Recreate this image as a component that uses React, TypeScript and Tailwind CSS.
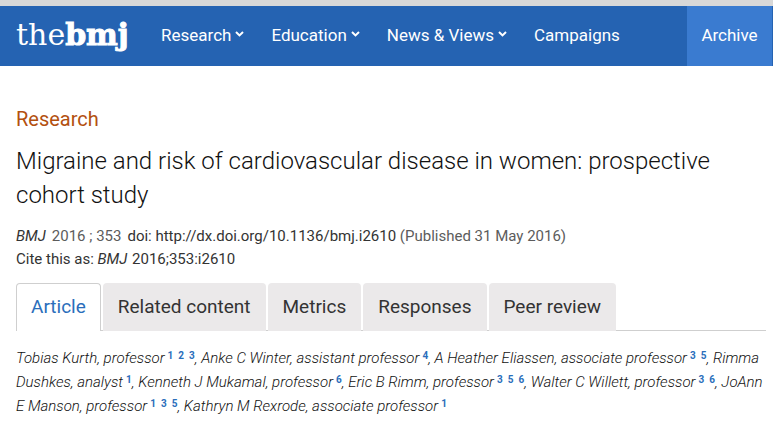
import React from "react";

interface NavItem {
  label: string;
  menu: boolean;
}

interface Author {
  name: string;
  role: string;
  refs: number[];
}

const navItems: NavItem[] = [
  { label: "Research", menu: true },
  { label: "Education", menu: true },
  { label: "News & Views", menu: true },
  { label: "Campaigns", menu: false },
];

const tabs = [
  "Article",
  "Related content",
  "Metrics",
  "Responses",
  "Peer review",
];

const authors: Author[] = [
  { name: "Tobias Kurth", role: "professor", refs: [1, 2, 3] },
  { name: "Anke C Winter", role: "assistant professor", refs: [4] },
  { name: "A Heather Eliassen", role: "associate professor", refs: [3, 5] },
  { name: "Rimma Dushkes", role: "analyst", refs: [1] },
  { name: "Kenneth J Mukamal", role: "professor", refs: [6] },
  { name: "Eric B Rimm", role: "professor", refs: [3, 5, 6] },
  { name: "Walter C Willett", role: "professor", refs: [3, 6] },
  { name: "JoAnn E Manson", role: "professor", refs: [1, 3, 5] },
  { name: "Kathryn M Rexrode", role: "associate professor", refs: [1] },
];

function Chevron() {
  return (
    <svg
      viewBox="0 0 9 6"
      className="mb-1 h-[6px] w-[9px]"
      fill="none"
      stroke="currentColor"
      strokeWidth="2"
      aria-hidden="true"
    >
      <path d="M1 1 L4.5 4.4 L8 1" />
    </svg>
  );
}

function Logo() {
  return (
    <a
      href="#"
      className="flex w-[145px] shrink-0 font-['DejaVu_Serif',serif] text-[30px] leading-[58px]"
    >
      <span>the</span>
      <span className="font-bold [-webkit-text-stroke:1px_white]">bmj</span>
    </a>
  );
}

function Header() {
  return (
    <header className="flex h-[66px] items-stretch border-t-[6px] border-[#d8d8d8] bg-[#2563b2] pr-px pl-4 text-[17px] text-white">
      <Logo />
      <nav className="flex flex-1 items-center gap-[27px] whitespace-nowrap">
        {navItems.map((item) =>
          item.menu ? (
            <button key={item.label} className="flex items-center gap-1">
              {item.label}
              <Chevron />
            </button>
          ) : (
            <a key={item.label} href="#">
              {item.label}
            </a>
          )
        )}
      </nav>
      <a
        href="#"
        className="flex w-[85px] shrink-0 items-center justify-center bg-[#3a7bd0]"
      >
        Archive
      </a>
    </header>
  );
}

function Tabs() {
  return (
    <div
      role="tablist"
      className="mt-3 flex gap-[2px] border-b border-[#cfcfcf] text-[19px] whitespace-nowrap"
    >
      {tabs.map((tab, index) => (
        <button
          key={tab}
          role="tab"
          aria-selected={index === 0}
          className={
            index === 0
              ? "-mb-px h-12 rounded-t border border-b-0 border-[#cfcfcf] bg-white px-[14px] text-[#2a6ebb]"
              : "-mb-px h-12 rounded-t bg-[#ebe9ea] px-[15px]"
          }
        >
          {tab}
        </button>
      ))}
    </div>
  );
}

function Authors() {
  return (
    <p className="mt-[15px] text-[15px] leading-6 font-light text-[#111111] italic">
      {authors.map((author, index) => (
        <React.Fragment key={author.name}>
          {`${index > 0 ? ", " : ""}${author.name}, ${author.role}`}
          <sup className="-top-1 ml-[3px] text-[10px] leading-none font-bold text-[#2a6ebb] not-italic">
            {author.refs.map((ref, i) => (
              <a key={ref} href="#" className={i > 0 ? "ml-[5px]" : ""}>
                {ref}
              </a>
            ))}
          </sup>
        </React.Fragment>
      ))}
    </p>
  );
}

export default function App() {
  return (
    <div className="bg-white font-['Roboto',sans-serif] text-[#333333]">
      <Header />
      <main className="pt-[39px] pr-[7px] pl-4">
        <p className="text-xl leading-7 text-[#b3500f]">Research</p>
        <h1 className="mt-[11px] text-2xl leading-[34px] font-light text-[#111111]">
          Migraine and risk of cardiovascular disease in women: prospective
          cohort study
        </h1>
        <div className="mt-[13px] text-[15px] leading-[23px]">
          <p className="flex flex-wrap gap-x-[6px]">
            <i>BMJ</i>
            <span className="text-[#5c5c5c]">2016 ; 353</span>
            <span>
              doi:{" "}
              <a href="#">http://dx.doi.org/10.1136/bmj.i2610</a>{" "}
              <span className="text-[#5c5c5c]">(Published 31 May 2016)</span>
            </span>
          </p>
          <p>
            Cite this as: <i className="mr-px">BMJ</i> 2016;353:i2610
          </p>
        </div>
        <Tabs />
        <Authors />
      </main>
    </div>
  );
}
